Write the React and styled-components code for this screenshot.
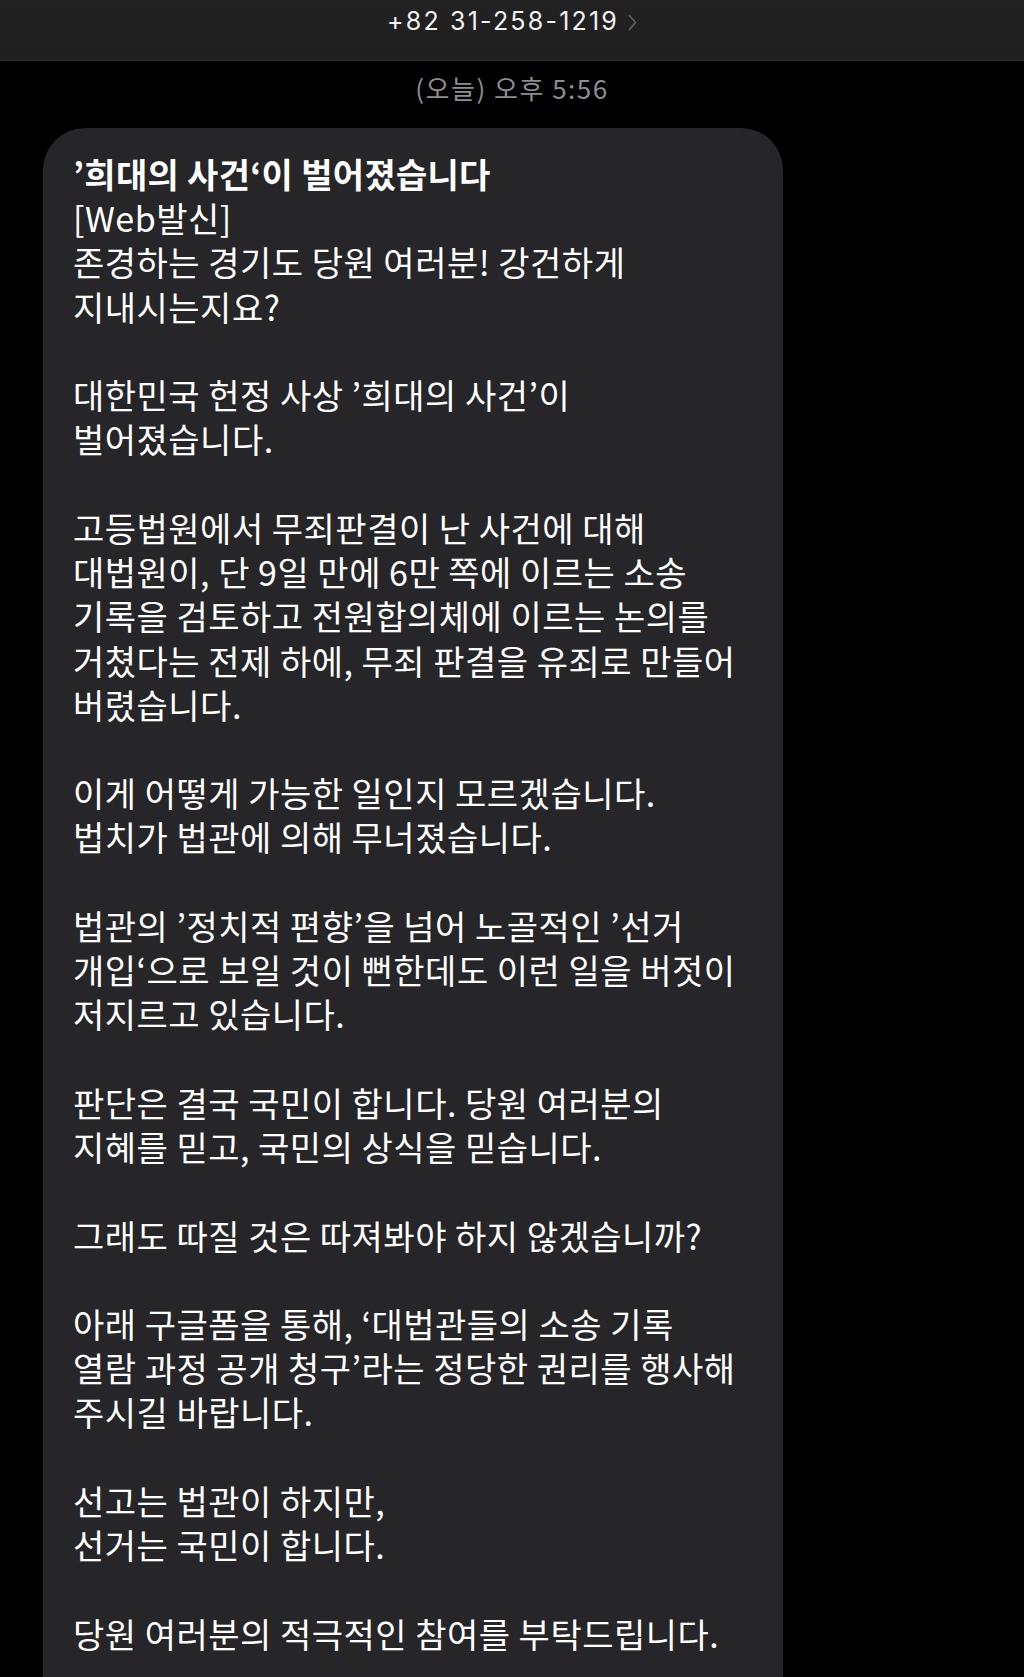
import React from "react";
import styled, { createGlobalStyle } from "styled-components";

const Global = createGlobalStyle`
  html, body { margin: 0; padding: 0; background: #000; }
  body { font-family: "Noto Sans CJK KR", "Noto Sans", sans-serif; -webkit-font-smoothing: antialiased; }
`;

const Page = styled.div`
  width: 1024px;
  min-height: 1677px;
  background: #000;
  overflow: hidden;
`;

const Header = styled.header`
  display: flex;
  align-items: center;
  justify-content: center;
  gap: 9px;
  background: linear-gradient(180deg, #222223 0%, #1f1f20 100%);
  border-bottom: 1px solid #2a2a2b;
  padding-bottom: 18px;
  height: 42px;
`;

const Phone = styled.span`
  font-family: "Inter", "Liberation Sans", sans-serif;
  font-size: 25px;
  color: #f2f2f2;
  letter-spacing: 2.2px;
`;

const Chevron = styled.svg`
  width: 9px;
  height: 17px;
  margin-top: 2px;
`;

const Stamp = styled.div`
  text-align: center;
  font-family: "Noto Sans CJK KR", "Inter", sans-serif;
  font-size: 26px;
  line-height: 30px;
  letter-spacing: 1.5px;
  color: #8d8d92;
  padding-top: 12px;
`;

const Bubble = styled.div`
  margin: 25px 0 0 43px;
  width: 740px;
  box-sizing: border-box;
  background: #262628;
  border-radius: 42px 42px 0 0;
  padding: 24px 30px 80px 30px;
  color: #ffffff;
  font-size: 34px;
  letter-spacing: 0.5px;
  line-height: 44.23px;
  white-space: nowrap;
`;

const Para = styled.p`
  margin: 0 0 44.23px 0;
  &:last-child { margin-bottom: 0; }
`;

const Title = styled.span`
  font-weight: 700;
  letter-spacing: 0.3px;
`;

const paragraphs = [
  ["희대의 사건", "[Web발신]", "존경하는 경기도 당원 여러분! 강건하게", "지내시는지요?"],
  ["대한민국 헌정 사상 ’희대의 사건’이", "벌어졌습니다."],
  [
    "고등법원에서 무죄판결이 난 사건에 대해",
    "대법원이, 단 9일 만에 6만 쪽에 이르는 소송",
    "기록을 검토하고 전원합의체에 이르는 논의를",
    "거쳤다는 전제 하에, 무죄 판결을 유죄로 만들어",
    "버렸습니다.",
  ],
  ["이게 어떻게 가능한 일인지 모르겠습니다.", "법치가 법관에 의해 무너졌습니다."],
  [
    "법관의 ’정치적 편향’을 넘어 노골적인 ’선거",
    "개입‘으로 보일 것이 뻔한데도 이런 일을 버젓이",
    "저지르고 있습니다.",
  ],
  ["판단은 결국 국민이 합니다. 당원 여러분의", "지혜를 믿고, 국민의 상식을 믿습니다."],
  ["그래도 따질 것은 따져봐야 하지 않겠습니까?"],
  [
    "아래 구글폼을 통해, ‘대법관들의 소송 기록",
    "열람 과정 공개 청구’라는 정당한 권리를 행사해",
    "주시길 바랍니다.",
  ],
  ["선고는 법관이 하지만,", "선거는 국민이 합니다."],
  ["당원 여러분의 적극적인 참여를 부탁드립니다."],
];

export default function App() {
  return (
    <Page>
      <Global />
      <Header>
        <Phone>+82 31-258-1219</Phone>
        <Chevron viewBox="0 0 9 17">
          <path d="M1.5 1.5 L7.5 8.5 L1.5 15.5" fill="none" stroke="#5d5d60" strokeWidth="1.8" strokeLinecap="round" strokeLinejoin="round" />
        </Chevron>
      </Header>
      <Stamp>(오늘) 오후 5:56</Stamp>
      <Bubble>
        {paragraphs.map((lines, i) => (
          <Para key={i}>
            {lines.map((l, j) => (
              <React.Fragment key={j}>
                {i === 0 && j === 0 ? <Title>’희대의 사건‘이 벌어졌습니다</Title> : l}
                {j < lines.length - 1 && <br />}
              </React.Fragment>
            ))}
          </Para>
        ))}
      </Bubble>
    </Page>
  );
}
